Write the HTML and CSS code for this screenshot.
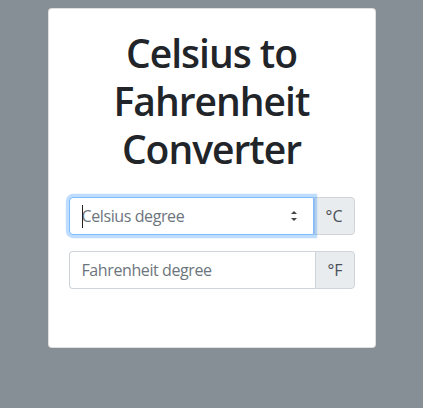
FILE: index.html
```html
<!DOCTYPE html>
<html lang="en">
<head>
<meta charset="utf-8">
<title>Celsius to Fahrenheit Converter</title>
<link rel="stylesheet" href="styles.css">
</head>
<body>
<main class="card">
  <h1 class="title">Celsius to Fahrenheit Converter</h1>
  <form class="form">
    <div class="input-group">
      <div class="field focused">
        <input class="control" type="text" placeholder="Celsius degree">
        <span class="caret"></span>
        <svg class="spinner" width="8" height="14" viewBox="0 0 8 14" aria-hidden="true">
          <path d="M4 2 L7 5 L1 5 Z" fill="#444"/>
          <path d="M1 9 L7 9 L4 12 Z" fill="#444"/>
        </svg>
      </div>
      <span class="addon">°C</span>
    </div>
    <div class="input-group">
      <div class="field">
        <input class="control" type="text" placeholder="Fahrenheit degree">
      </div>
      <span class="addon">°F</span>
    </div>
  </form>
</main>
</body>
</html>
```

FILE: styles.css
```css
html, body {
  margin: 0;
  padding: 0;
}
body {
  background: #868e96;
  padding: 8px 0;
  font-family: "Open Sans", "Noto Sans", "Liberation Sans", sans-serif;
  color: #212529;
}
.card {
  width: 328px;
  box-sizing: border-box;
  margin: 0 auto;
  background: #fff;
  border: 1px solid rgba(0, 0, 0, 0.125);
  border-radius: 4px;
  padding: 20px 20px 58px;
}
.title {
  margin: 0 0 24px;
  font-size: 39px;
  line-height: 48px;
  font-weight: 600;
  letter-spacing: -1px;
  text-align: center;
  color: #212529;
}
.form {
  display: flex;
  flex-direction: column;
  gap: 16px;
}
.input-group {
  display: flex;
  height: 38px;
}
.field {
  position: relative;
  flex: 1;
  display: flex;
}
.control {
  flex: 1;
  width: 100%;
  box-sizing: border-box;
  height: 38px;
  margin: 0;
  padding: 6px 12px;
  font-family: inherit;
  font-size: 16px;
  letter-spacing: -0.4px;
  color: #495057;
  background: #fff;
  border: 1px solid #ced4da;
  border-right: none;
  border-radius: 4px 0 0 4px;
  outline: none;
}
.control::placeholder {
  color: #6c757d;
  opacity: 1;
}
.focused .control {
  border: 1px solid #80bdff;
  box-shadow: 0 0 0 3.2px rgba(0, 123, 255, 0.25);
  position: relative;
  z-index: 1;
}
.caret {
  position: absolute;
  left: 13px;
  top: 8px;
  width: 1px;
  height: 23px;
  background: #222;
  z-index: 2;
}
.spinner {
  position: absolute;
  right: 16px;
  top: 12px;
  z-index: 2;
}
.addon {
  display: flex;
  align-items: center;
  box-sizing: border-box;
  padding: 0 11px;
  font-size: 16px;
  color: #495057;
  background: #e9ecef;
  border: 1px solid #ced4da;
  border-radius: 0 4px 4px 0;
}
```
